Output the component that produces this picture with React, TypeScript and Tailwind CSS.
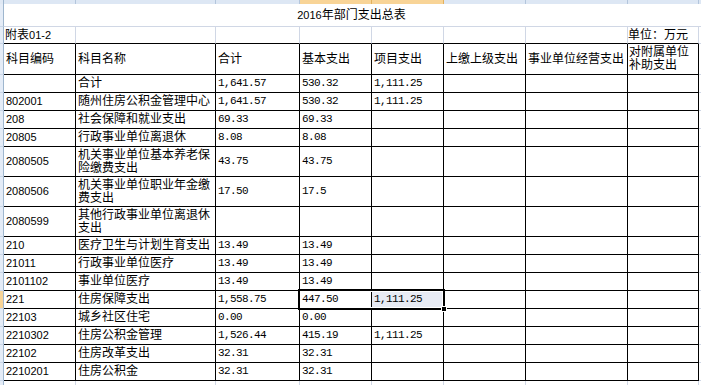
import React from "react";

type Row = {
  code: string;
  name: string[];
  c: string;
  d: string;
  e: string;
  h: "s" | "d";
  sel?: boolean;
};

const rows: Row[] = [
  { code: "", name: ["合计"], c: "1,641.57", d: "530.32", e: "1,111.25", h: "s" },
  { code: "802001", name: ["随州住房公积金管理中心"], c: "1,641.57", d: "530.32", e: "1,111.25", h: "s" },
  { code: "208", name: ["社会保障和就业支出"], c: "69.33", d: "69.33", e: "", h: "s" },
  { code: "20805", name: ["行政事业单位离退休"], c: "8.08", d: "8.08", e: "", h: "s" },
  { code: "2080505", name: ["机关事业单位基本养老保", "险缴费支出"], c: "43.75", d: "43.75", e: "", h: "d" },
  { code: "2080506", name: ["机关事业单位职业年金缴", "费支出"], c: "17.50", d: "17.5", e: "", h: "d" },
  { code: "2080599", name: ["其他行政事业单位离退休", "支出"], c: "", d: "", e: "", h: "d" },
  { code: "210", name: ["医疗卫生与计划生育支出"], c: "13.49", d: "13.49", e: "", h: "s" },
  { code: "21011", name: ["行政事业单位医疗"], c: "13.49", d: "13.49", e: "", h: "s" },
  { code: "2101102", name: ["事业单位医疗"], c: "13.49", d: "13.49", e: "", h: "s" },
  { code: "221", name: ["住房保障支出"], c: "1,558.75", d: "447.50", e: "1,111.25", h: "s", sel: true },
  { code: "22103", name: ["城乡社区住宅"], c: "0.00", d: "0.00", e: "", h: "s" },
  { code: "2210302", name: ["住房公积金管理"], c: "1,526.44", d: "415.19", e: "1,111.25", h: "s" },
  { code: "22102", name: ["住房改革支出"], c: "32.31", d: "32.31", e: "", h: "s" },
  { code: "2210201", name: ["住房公积金"], c: "32.31", d: "32.31", e: "", h: "s" },
];

const mono = "font-['Liberation_Mono',monospace] text-[11px] tracking-[-0.6px]";
const cell = "border-r border-b border-black flex items-center pl-[2px] overflow-hidden whitespace-nowrap";

function Strip({ h, orange }: { h: string; orange?: boolean }) {
  return (
    <div
      className={`${h} border-r border-b border-r-[#9eb6ce] border-b-[#c9d6e8] ${
        orange ? "bg-[#f8d497]" : "bg-[#e4ecf7]"
      }`}
    />
  );
}

function Rest({ h }: { h: string }) {
  return <div className={`${h} border-b border-[#d0d7e5]`} />;
}

export default function App() {
  const topCols = [false, false, false, true, true, false, false, false];
  return (
    <div className="relative w-[701px] h-[385px] overflow-hidden bg-white text-black font-['Liberation_Sans','Noto_Sans_CJK_SC',sans-serif] text-[12px] leading-[13px]">
      <div className="grid grid-cols-[4px_72px_140px_84px_72px_72px_82px_102px_71px_2px]">
        {/* column header strip */}
        <div className="h-[4px] bg-[#dfe8f4] border-r border-[#9eb6ce]" />
        {topCols.map((o, i) => (
          <div
            key={i}
            className={`h-[4px] border-r ${o ? "bg-[#f8d497] border-[#e2b15e]" : "bg-[#dde7f4] border-[#b3c5dc]"}`}
          />
        ))}
        <div className="h-[4px] bg-[#dde7f4]" />

        {/* title row */}
        <Strip h="h-[23px]" />
        <div className="col-span-8 h-[23px] border-b border-[#d0d7e5] flex items-center justify-center">
          <span className="text-[11px]">2016</span>
          <span>年部门支出总表</span>
        </div>
        <Rest h="h-[23px]" />

        {/* 附表 row */}
        <Strip h="h-[17px]" />
        <div className="h-[17px] border-r border-b border-r-[#d0d7e5] border-b-black flex items-center pl-[1px] whitespace-nowrap">
          附表<span className="text-[11px]">01-2</span>
        </div>
        {[0, 1, 2, 3, 4, 5].map((i) => (
          <div key={i} className="h-[17px] border-r border-b border-r-[#d0d7e5] border-b-black" />
        ))}
        <div className="h-[17px] border-r border-b border-r-[#d0d7e5] border-b-black flex items-center whitespace-nowrap">
          单位：万元
        </div>
        <Rest h="h-[17px]" />

        {/* header row */}
        <Strip h="h-[31px]" />
        <div className={`h-[31px] ${cell}`}>科目编码</div>
        <div className={`h-[31px] ${cell}`}>科目名称</div>
        <div className={`h-[31px] ${cell}`}>合计</div>
        <div className={`h-[31px] ${cell} pl-[1px]`}>基本支出</div>
        <div className={`h-[31px] ${cell}`}>项目支出</div>
        <div className={`h-[31px] ${cell}`}>上缴上级支出</div>
        <div className={`h-[31px] ${cell} pl-[1px]`}>事业单位经营支出</div>
        <div className={`h-[31px] border-r border-b border-black flex flex-col justify-center pl-[1px] whitespace-nowrap`}>
          <span>对附属单位</span>
          <span>补助支出</span>
        </div>
        <Rest h="h-[31px]" />

        {/* data rows */}
        {rows.map((r, i) => {
          const h = r.h === "d" ? "h-[30px]" : "h-[18px]";
          return (
            <React.Fragment key={i}>
              <Strip h={h} orange={r.sel} />
              <div className={`${h} ${cell} text-[11px]`}>{r.code}</div>
              <div className={`${h} border-r border-b border-black flex flex-col justify-center pl-[2px] whitespace-nowrap overflow-hidden`}>
                {r.name.map((n, j) => (
                  <span key={j}>{n}</span>
                ))}
              </div>
              <div className={`${h} ${cell} ${mono}`}>{r.c}</div>
              <div className={`${h} ${cell} ${mono}`}>{r.d}</div>
              <div className={`${h} ${cell} ${mono} ${r.sel ? "bg-[#e8ebf4]" : ""}`}>{r.e}</div>
              <div className={`${h} ${cell}`} />
              <div className={`${h} ${cell}`} />
              <div className={`${h} ${cell}`} />
              <Rest h={h} />
            </React.Fragment>
          );
        })}

        {/* trailing partial row */}
        <div className="h-[4px] bg-[#e4ecf7] border-r border-[#9eb6ce]" />
        {[0, 1, 2, 3, 4, 5, 6, 7].map((i) => (
          <div key={i} className="h-[4px] border-r border-[#d0d7e5]" />
        ))}
        <div className="h-[4px]" />
      </div>

      {/* selection outline */}
      <div className="absolute left-[298px] top-[289px] w-[147px] h-[21px] border-2 border-black shadow-[inset_0_0_0_1px_white] pointer-events-none" />
      <div className="absolute left-[441px] top-[306px] w-[6px] h-[6px] bg-black border border-white" />
    </div>
  );
}
